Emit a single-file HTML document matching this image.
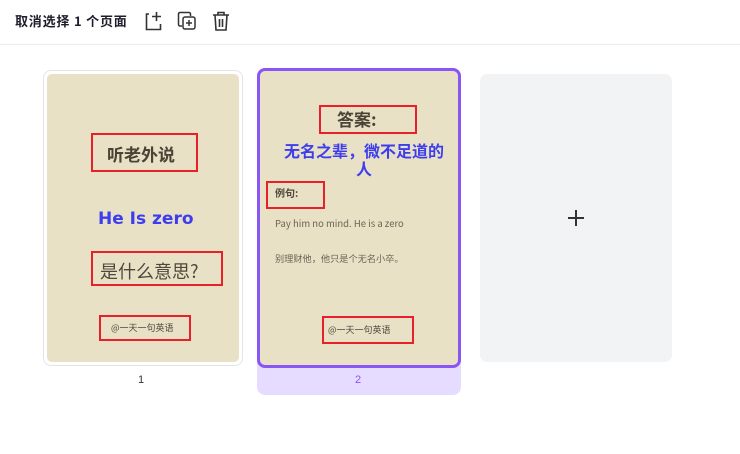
<!DOCTYPE html>
<html><head><meta charset="utf-8"><style>
*{margin:0;padding:0;box-sizing:border-box}
body{width:740px;height:454px;background:#fff;font-family:"Liberation Sans","Noto Sans CJK SC",sans-serif;position:relative;overflow:hidden}
.a{position:absolute}
.hdr{left:0;top:0;width:740px;height:45px;border-bottom:1px solid #ececef}
.t{left:15px;top:12px;font-size:13px;font-weight:bold;letter-spacing:0.8px;color:#1d1d2b;white-space:nowrap;font-family:"Noto Sans CJK SC",sans-serif;line-height:18px}
.bg{background:#e9e1c6}
.rb{position:absolute;border:2px solid #e8202a}
.cn{font-family:"Noto Sans CJK SC",sans-serif;white-space:nowrap;position:absolute}
</style></head><body>
<div class="a hdr"></div>
<div class="a t">取消选择 1 个页面</div>
<svg class="a" style="left:144px;top:10px" width="20" height="22" viewBox="0 0 20 22" fill="none" stroke="#333" stroke-width="1.6">
<path d="M5 4H2.5v15.5h14V14"/><path d="M12.5 2v9M8 6.5h9"/></svg>
<svg class="a" style="left:176px;top:10px" width="22" height="22" viewBox="0 0 22 22" fill="none" stroke="#333" stroke-width="1.5">
<path d="M6 16H4a1.5 1.5 0 0 1-1.5-1.5V4A1.5 1.5 0 0 1 4 2.5h9A1.5 1.5 0 0 1 14.5 4v2"/>
<rect x="7" y="7" width="12" height="12" rx="2"/><path d="M13 10v6M10 13h6"/></svg>
<svg class="a" style="left:211px;top:10px" width="20" height="22" viewBox="0 0 20 22" fill="none" stroke="#333" stroke-width="1.6">
<path d="M2 5h16M7 5V2.5h6V5M4 5l1 15h10l1-15M8.5 9v8M11.5 9v8"/></svg>

<!-- card1 -->
<div class="a" style="left:43px;top:70px;width:200px;height:296px;border:1px solid #e3e4ea;border-radius:8px;background:#fff"></div>
<div class="a bg" style="left:47px;top:74px;width:192px;height:288px;border-radius:5px"></div>
<div class="rb" style="left:91px;top:133px;width:107px;height:39px"></div>
<div class="cn" style="left:107px;top:143px;font-size:17px;font-weight:bold;color:#4a4235;line-height:22px">听老外说</div>
<div class="cn" style="left:98px;top:208px;font-size:17px;font-weight:bold;color:#3d3df0;line-height:22px;font-family:'DejaVu Sans',sans-serif">He Is zero</div>
<div class="rb" style="left:91px;top:251px;width:132px;height:35px"></div>
<div class="cn" style="left:100px;top:259px;font-size:18px;color:#4e483c;line-height:24px">是什么意思?</div>
<div class="rb" style="left:99px;top:315px;width:92px;height:26px"></div>
<div class="cn" style="left:111px;top:322px;font-size:9px;color:#4e483c;line-height:12px">@一天一句英语</div>
<div class="a" style="left:138px;top:374px;font-size:11px;color:#333">1</div>

<!-- card2 -->
<div class="a" style="left:257px;top:68px;width:204px;height:327px;border-radius:8px;background:#e6dcff"></div>
<div class="a bg" style="left:257px;top:68px;width:204px;height:300px;border:3px solid #8a55f5;border-radius:8px"></div>
<div class="rb" style="left:319px;top:105px;width:98px;height:29px"></div>
<div class="cn" style="left:337px;top:108px;font-size:17px;font-weight:bold;color:#4a4235;line-height:22px">答案:</div>
<div class="cn" style="left:280px;top:141px;width:168px;text-align:center;white-space:normal;font-size:16px;font-weight:bold;color:#3d3df0;line-height:18px">无名之辈，微不足道的人</div>
<div class="rb" style="left:266px;top:181px;width:59px;height:28px"></div>
<div class="cn" style="left:275px;top:186px;font-size:10px;font-weight:bold;color:#4e483c;line-height:14px">例句:</div>
<div class="cn" style="left:275px;top:217px;font-size:9.5px;color:#6b6454;line-height:12px">Pay him no mind. He is a zero</div>
<div class="cn" style="left:275px;top:252px;font-size:9.2px;color:#6b6454;line-height:12px">别理财他，他只是个无名小卒。</div>
<div class="rb" style="left:322px;top:316px;width:92px;height:28px"></div>
<div class="cn" style="left:328px;top:324px;font-size:9px;color:#4e483c;line-height:12px">@一天一句英语</div>
<div class="a" style="left:355px;top:374px;font-size:11px;color:#8a55f5">2</div>

<!-- card3 -->
<div class="a" style="left:480px;top:74px;width:192px;height:288px;border-radius:7px;background:#f2f3f5"></div>
<div class="a" style="left:568px;top:217px;width:16px;height:1.6px;background:#333"></div>
<div class="a" style="left:575.2px;top:210px;width:1.6px;height:16px;background:#333"></div>
</body></html>
